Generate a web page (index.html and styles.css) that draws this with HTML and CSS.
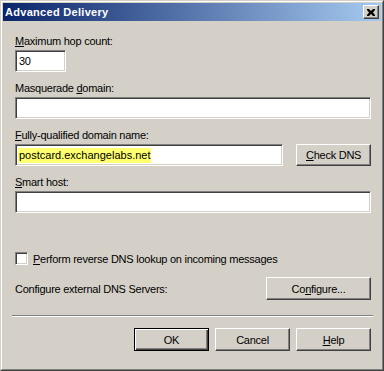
FILE: index.html
```html
<html>
<head>
<meta charset="utf-8">
<title>Advanced Delivery</title>
<link rel="stylesheet" href="styles.css">
</head>
<body>
<div class="window">
  <div class="frame">
    <div class="titlebar">
      <span class="title">Advanced Delivery</span>
      <span class="close-btn">
        <svg width="8" height="7" viewBox="0 0 8 7">
          <path d="M0 0h2l2 2 2-2h2v1l-2 2.5 2 2.5v1h-2l-2-2-2 2h-2v-1l2-2.5-2-2.5z" fill="#000"/>
        </svg>
      </span>
    </div>
    <div class="dialog">
      <div class="label first"><u>M</u>aximum hop count:</div>
      <div class="edit hop">30</div>

      <div class="label">Masquerade <u>d</u>omain:</div>
      <div class="edit wide"></div>

      <div class="label"><u>F</u>ully-qualified domain name:</div>
      <div class="row fqdn-row">
        <div class="edit fqdn"><span class="marked">postcard.exchangelabs.net</span></div>
        <div class="button"><u>C</u>heck DNS</div>
      </div>

      <div class="label"><u>S</u>mart host:</div>
      <div class="edit wide"></div>

      <div class="row check-row">
        <span class="checkbox"></span>
        <span class="check-label"><u>P</u>erform reverse DNS lookup on incoming messages</span>
      </div>

      <div class="row config-row">
        <span>Configure external DNS Servers:</span>
        <div class="button config">Co<u>n</u>figure...</div>
      </div>

      <div class="separator"></div>

      <div class="row actions">
        <div class="button default">OK</div>
        <div class="button">Cancel</div>
        <div class="button"><u>H</u>elp</div>
      </div>
    </div>
  </div>
</div>
</body>
</html>
```

FILE: styles.css
```css
html, body {
  margin: 0;
  padding: 0;
  background: #d4d0c8;
}
body {
  font-family: "Liberation Sans", Arial, sans-serif;
  font-size: 11px;
  letter-spacing: -0.25px;
  color: #000;
}
.window {
  width: 384px;
  height: 371px;
  box-sizing: border-box;
  border: 1px solid;
  border-color: #d4d0c8 #404040 #404040 #d4d0c8;
}
.frame {
  height: 100%;
  box-sizing: border-box;
  border: 1px solid;
  border-color: #fff #808080 #808080 #fff;
  padding: 1px;
}
.titlebar {
  height: 18px;
  display: flex;
  align-items: center;
  justify-content: space-between;
  padding: 0 2px;
  background: linear-gradient(to right, #0a246a, #a6caf0);
}
.title {
  color: #fff;
  font-weight: bold;
  font-size: 11px;
  letter-spacing: 0.3px;
}
.close-btn {
  width: 16px;
  height: 14px;
  box-sizing: border-box;
  display: flex;
  align-items: center;
  justify-content: center;
  background: #d4d0c8;
  border: 1px solid;
  border-color: #fff #404040 #404040 #fff;
  box-shadow: inset -1px -1px #808080;
}
.dialog {
  display: flex;
  flex-direction: column;
  padding: 14px 10px 0 12px;
}
.label {
  line-height: 13px;
  margin-top: 10px;
  margin-bottom: 2px;
}
.label.first {
  margin-top: 0;
}
.edit {
  height: 22px;
  box-sizing: border-box;
  background: #fff;
  border: 1px solid;
  border-color: #808080 #fff #fff #808080;
  box-shadow: inset 1px 1px #404040, inset -1px -1px #d4d0c8;
  padding: 3px 3px;
  line-height: 14px;
  white-space: nowrap;
}
.hop {
  width: 51px;
}
.wide {
  width: 356px;
}
.row {
  display: flex;
  align-items: center;
}
.fqdn-row {
  gap: 13px;
}
.fqdn {
  width: 269px;
  padding-left: 2px;
}
.marked {
  background: #ffff70;
  padding: 1px 1px 2px;
  letter-spacing: 0;
}
.button {
  width: 75px;
  height: 22px;
  box-sizing: border-box;
  display: flex;
  align-items: center;
  justify-content: center;
  background: #d4d0c8;
  border: 1px solid;
  border-color: #fff #404040 #404040 #fff;
  box-shadow: inset -1px -1px #808080;
}
.check-row {
  margin-top: 39px;
  gap: 5px;
}
.checkbox {
  width: 13px;
  height: 13px;
  box-sizing: border-box;
  background: #fff;
  border: 1px solid;
  border-color: #808080 #fff #fff #808080;
  box-shadow: inset 1px 1px #404040, inset -1px -1px #d4d0c8;
}
.config-row {
  margin-top: 12px;
  justify-content: space-between;
}
.button.config {
  width: 105px;
  height: 23px;
}
.separator {
  margin: 15px -2px 0 -3px;
  border-top: 1px solid #808080;
  border-bottom: 1px solid #fff;
}
.actions {
  margin-top: 11px;
  justify-content: flex-end;
  gap: 6px;
}
.actions .button {
  height: 23px;
}
.button.default {
  border: 1px solid #000;
  box-shadow: inset 1px 1px #fff, inset -1px -1px #404040, inset -2px -2px #808080;
}
```
